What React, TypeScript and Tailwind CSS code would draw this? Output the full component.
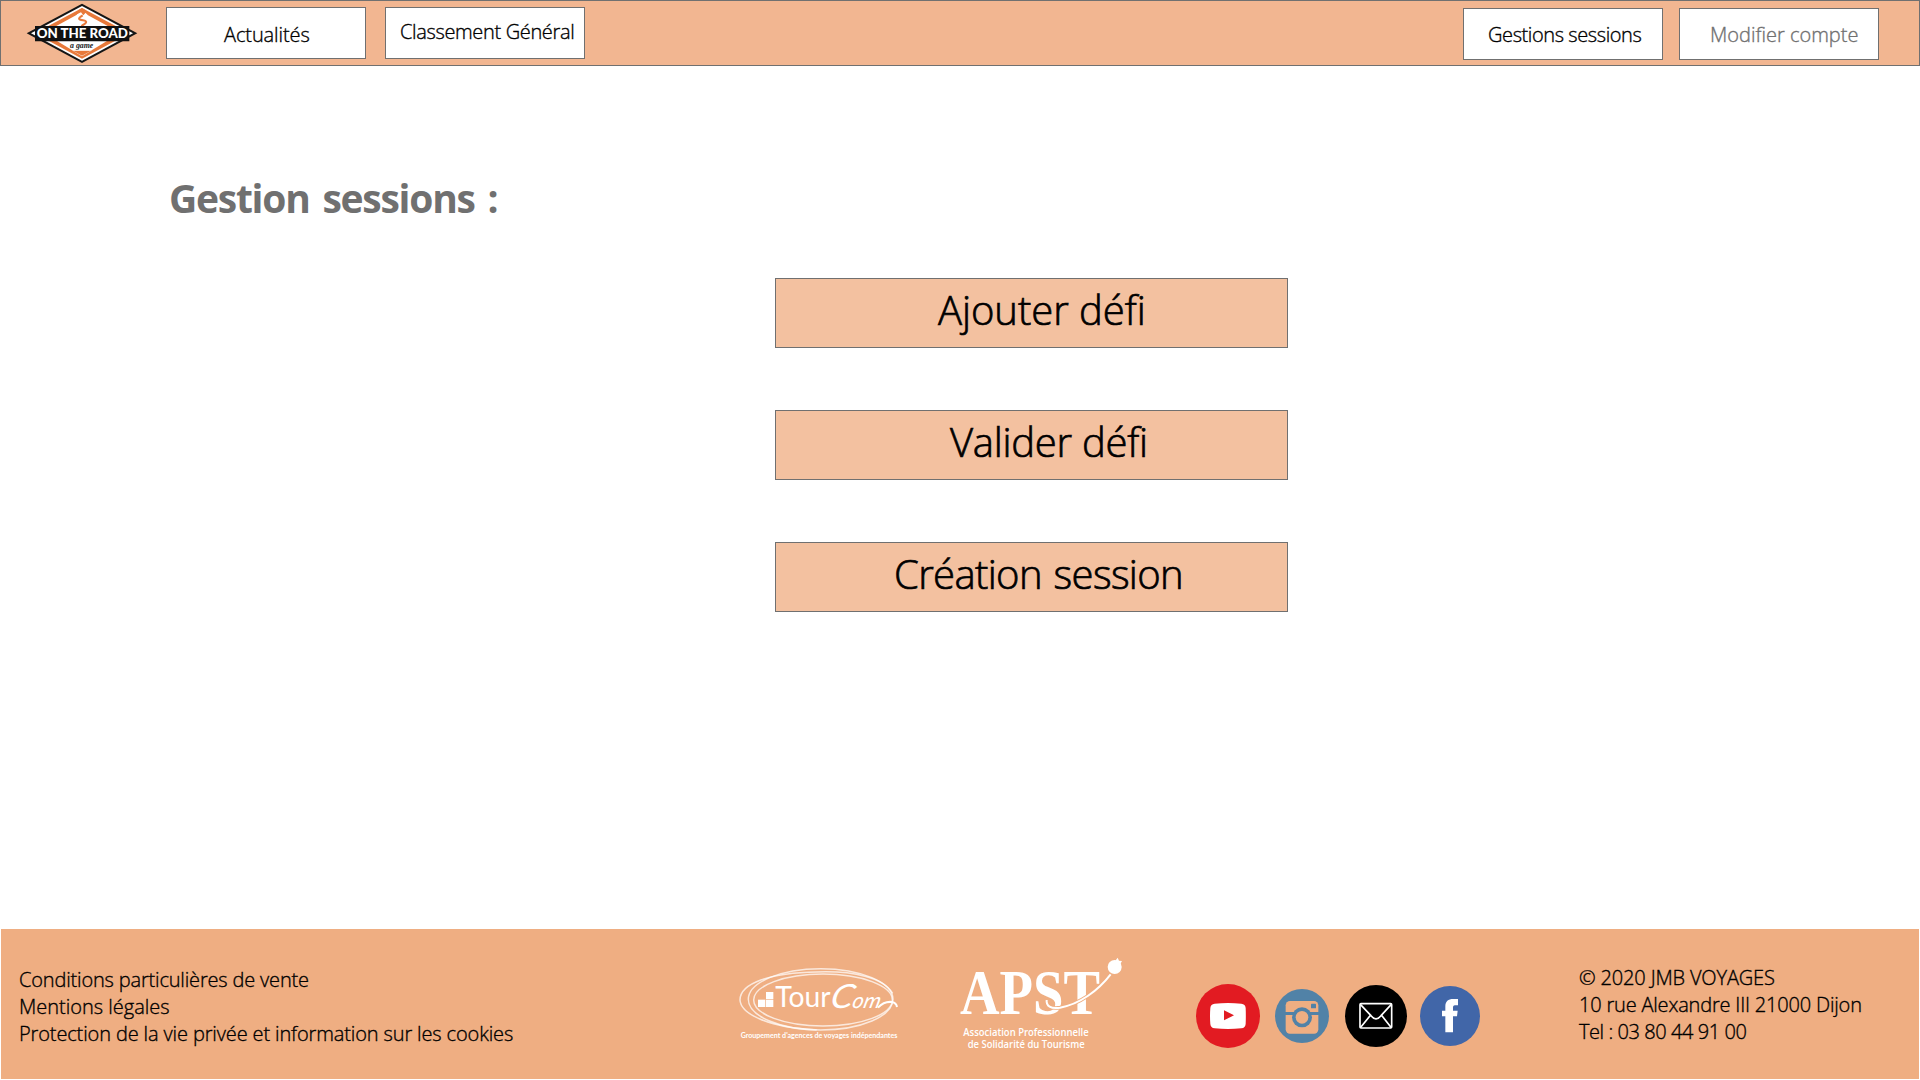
import React from 'react';

function RoadLogo() {
  return (
    <svg className="h-[60px] w-[112px]" viewBox="78 9 336 180">
      <path d="M246 11 412 100 246 189 80 100Z" fill="#151515" />
      <path d="M246 18 399 100 246 182 93 100Z" fill="#fff" />
      <path d="M246 24 388 100 246 176 104 100Z" fill="#e8793a" />
      <path d="M246 28 264 46 352 94V104L275 151H217L140 104V94L228 46Z" fill="#fff" />
      <path d="M236 30 246 24 256 30 266 42 257 38 250 46 243 37 226 45Z" fill="#e8793a" />
      <path d="M248 46C232 56 235 59 249 61 266 64 258 70 244 78" fill="none" stroke="#e8793a" strokeWidth="6" />
      <path d="M216 151H276L246 169Z" fill="#fff" />
      <path d="M220 153H272L246 167Z" fill="#e8793a" />
      <path d="M105 78H388V124H105Z" fill="#111" />
      <text x="110" y="115" fontFamily="Lato" fontWeight="900" fontSize="37" textLength="274" lengthAdjust="spacingAndGlyphs" fill="#fff">ON THE ROAD</text>
      <text x="210" y="144" fontFamily="Liberation Serif" fontStyle="italic" fontWeight="700" fontSize="25" textLength="70" lengthAdjust="spacingAndGlyphs" fill="#222">a game</text>
    </svg>
  );
}

function TourComLogo() {
  return (
    <svg className="h-[120px] w-[200px] [-webkit-text-stroke:0px]" viewBox="0 0 600 360">
      <g fill="none" stroke="#fff" strokeOpacity=".72" strokeWidth="4.5">
        <ellipse cx="309" cy="180" rx="208" ry="78" />
        <ellipse cx="302" cy="178" rx="217" ry="92" />
        <path d="M518 160C490 112 400 92 290 96 150 98 60 130 60 180 62 220 140 262 290 270" />
      </g>
      <g fill="#fff">
        <rect x="114" y="179" width="22" height="22" />
        <rect x="138" y="179" width="22" height="22" />
        <rect x="138" y="156" width="22" height="21" />
        <text x="166" y="202" fontFamily="Lato" fontWeight="400" fontSize="89" textLength="166" lengthAdjust="spacingAndGlyphs">Tour</text>
        <g transform="translate(0 204) skewX(-14)" fontFamily="Lato" fontWeight="400" fontStyle="italic">
          <text x="326" y="0" fontSize="100" textLength="68" lengthAdjust="spacingAndGlyphs">C</text>
          <text x="394" y="0" fontSize="64" textLength="84" lengthAdjust="spacingAndGlyphs">om</text>
        </g>
        <text x="62" y="294" fontFamily="Lato" fontWeight="700" fontSize="21" textLength="470" lengthAdjust="spacingAndGlyphs">Groupement d'agences de voyages indépendantes</text>
      </g>
      <path d="M474 203C488 188 500 184 516 186 526 188 530 194 531 201" fill="none" stroke="#fff" strokeWidth="6" />
    </svg>
  );
}

function ApstLogo() {
  return (
    <svg className="h-[120px] w-[200px] [-webkit-text-stroke:0px]" viewBox="0 0 600 360">
      <g fill="#fff">
        <text x="60" y="223" fontFamily="Liberation Serif" fontWeight="700" fontSize="187" textLength="420" lengthAdjust="spacingAndGlyphs">APST</text>
        <circle cx="524" cy="81" r="21" />
        <path d="M526 62 533 53 537 62 546 63 540 74Z" />
        <g fontFamily="Open Sans" fontSize="31" fontWeight="600">
          <text x="70" y="289" textLength="376" lengthAdjust="spacingAndGlyphs">Association Professionnelle</text>
          <text x="83" y="323" textLength="351" lengthAdjust="spacingAndGlyphs">de Solidarité du Tourisme</text>
        </g>
      </g>
      <path d="M512 103C474 152 420 192 360 203 332 207 318 198 320 180" fill="none" stroke="#efae82" strokeWidth="11" />
      <path d="M512 103C474 152 420 192 360 203 332 207 318 198 320 180" fill="none" stroke="#fff" strokeWidth="6" />
    </svg>
  );
}

function YoutubeIcon() {
  return (
    <svg className="size-16" viewBox="48 42 192 192">
      <circle cx="144" cy="138" r="96" fill="#e21b22" />
      <path d="M104 101Q144 97 184 101 196 102 197 114 198 138 197 162 196 174 184 175 144 179 104 175 92 174 91 162 89 138 91 114 92 102 104 101Z" fill="#fff" />
      <path d="M132 121 162 136 132 151Z" fill="#e21b22" />
    </svg>
  );
}

function InstagramIcon() {
  return (
    <svg className="ml-[15px] size-[54px]" viewBox="285 57 162 162">
      <circle cx="366" cy="138" r="81" fill="#5182a7" />
      <rect x="317" y="93" width="98" height="98" rx="13" fill="#efae82" />
      <path d="M315 126H417V135H315Z" fill="#5182a7" />
      <circle cx="366" cy="142" r="30" fill="#5182a7" />
      <circle cx="366" cy="142" r="19" fill="#efae82" />
      <rect x="393" y="101" width="15" height="14" rx="2" fill="#5182a7" />
    </svg>
  );
}

function MailIcon() {
  return (
    <svg className="ml-4 size-[62px]" viewBox="495 45 186 186">
      <circle cx="588" cy="138" r="93" fill="#000" />
      <g fill="none" stroke="#fff" strokeWidth="5" strokeLinejoin="round">
        <rect x="540" y="101" width="95" height="73" rx="3" />
        <path d="M541 103 573 137Q588 156 603 137L634 103M541 173 572 135M634 173 604 135" />
      </g>
    </svg>
  );
}

function FacebookIcon() {
  return (
    <svg className="ml-[13px] size-[60px]" viewBox="720 48 180 180">
      <circle cx="810" cy="138" r="90" fill="#4166a8" />
      <path d="M796 187V139H786V122H796V110C796 94 804 87 820 87H834V106H825C820 106 819 109 819 113V122H833L831 139H819V187Z" fill="#fff" />
    </svg>
  );
}

const navButton = 'flex h-[52px] w-[200px] border border-[#707070] bg-white whitespace-nowrap';
const action = 'flex h-[70px] w-[513px] border border-[#707070] bg-[#f3c1a0] pt-[4px] text-[40px] leading-[54px] whitespace-nowrap [-webkit-text-stroke:0.7px]';

export default function App() {
  return (
    <div className="flex h-[1080px] w-[1920px] flex-col overflow-hidden bg-white font-['Open_Sans',sans-serif] text-[20px] leading-[27px] font-light text-black [-webkit-text-stroke:0.35px]">
      <header className="flex h-[66px] shrink-0 items-start border border-[#707070] bg-[#f2b691]">
        <div className="mt-[2px] ml-[25px] [-webkit-text-stroke:0px]"><RoadLogo /></div>
        <nav className="mt-[6px] ml-[28px] flex gap-[19px]">
          <button className={`${navButton} pt-[13px] pl-[57px] tracking-[-0.1px]`}>Actualités</button>
          <button className={`${navButton} pt-[10px] pl-[14px] tracking-[-0.35px]`}>Classement Général</button>
        </nav>
        <nav className="mt-[7px] mr-[40px] ml-auto flex gap-4">
          <button className={`${navButton} pt-[12px] pl-[24px] tracking-[-0.41px]`}>Gestions sessions</button>
          <button className={`${navButton} pt-[12px] pl-[30px] text-[#707070]`}>Modifier compte</button>
        </nav>
      </header>

      <main className="flex-1 pt-[105px]">
        <h1 className="pl-[169px] text-[39px] leading-[54px] font-bold tracking-[-1.25px] text-[#707070] [-webkit-text-stroke:0px] [word-spacing:4px]">Gestion sessions :</h1>
        <div className="mt-[53px] ml-[775px] flex flex-col gap-[62px]">
          <button className={`${action} pl-[162px] tracking-[-0.05px]`}>Ajouter défi</button>
          <button className={`${action} pl-[174px] tracking-[-0.26px]`}>Valider défi</button>
          <button className={`${action} pl-[118px] tracking-[-0.65px] [word-spacing:2px]`}>Création session</button>
        </div>
      </main>

      <footer className="mx-px mb-px flex h-[150px] shrink-0 items-start bg-[#efae82] whitespace-nowrap">
        <ul className="w-[719px] pt-[37px] pl-[18px]">
          <li className="tracking-[-0.17px]">Conditions particulières de vente</li>
          <li>Mentions légales</li>
          <li className="tracking-[-0.13px]">Protection de la vie privée et information sur les cookies</li>
        </ul>
        <div className="mt-[11px] flex gap-5">
          <TourComLogo />
          <ApstLogo />
        </div>
        <div className="mt-[55px] ml-[56px] flex items-center">
          <YoutubeIcon />
          <InstagramIcon />
          <MailIcon />
          <FacebookIcon />
        </div>
        <address className="ml-[99px] pt-[35px] not-italic">
          <p className="tracking-[-0.15px]">© 2020 JMB VOYAGES</p>
          <p className="tracking-[-0.19px]">10 rue Alexandre III 21000 Dijon</p>
          <p className="tracking-[-0.43px]">Tel : 03 80 44 91 00</p>
        </address>
      </footer>
    </div>
  );
}
